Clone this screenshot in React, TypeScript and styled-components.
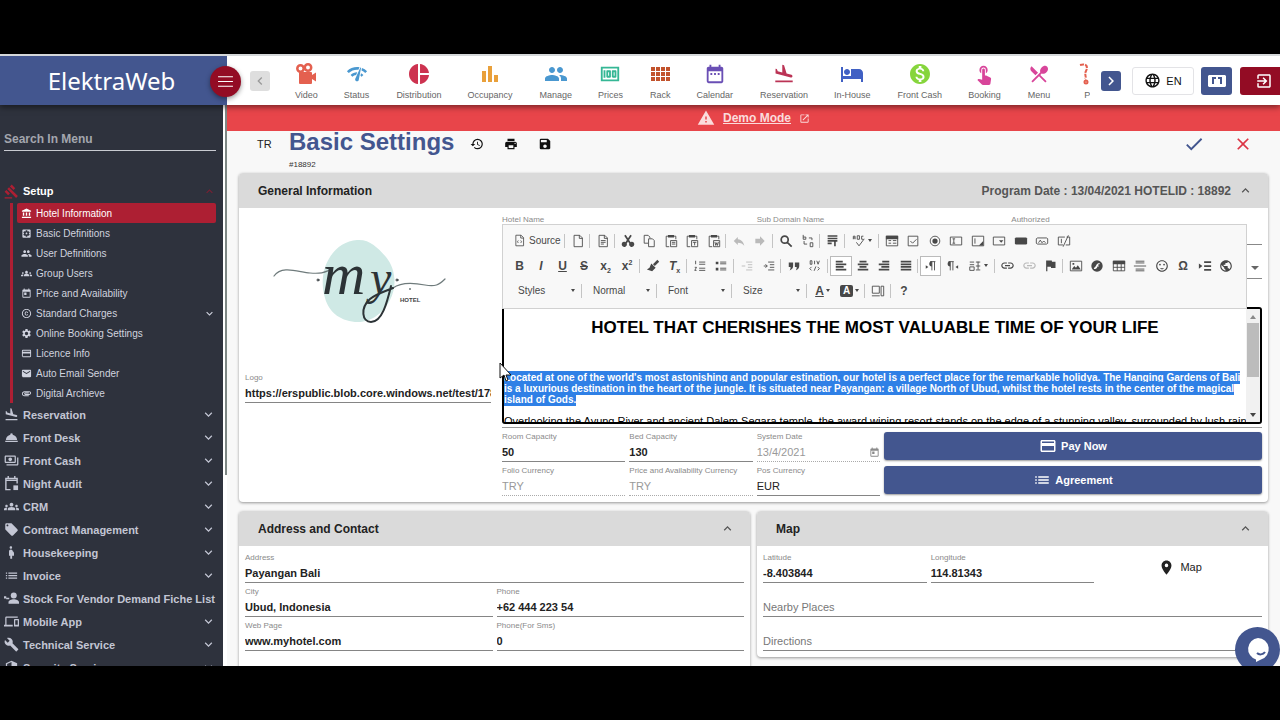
import React from "react";
import styled, { createGlobalStyle, css } from "styled-components";
import {
  MdAccountBalance, MdAttachment, MdBarChart, MdBuild, MdCheck, MdClose,
  MdCopyright, MdDateRange, MdDevices, MdEmail, MdExitToApp, MdExpandLess, MdExpandMore, MdFlag,
  MdFlightLand, MdForward, MdGavel, MdGroups, MdHistory, MdHotel, MdKeyboardArrowLeft,
  MdKeyboardArrowRight, MdLanguage, MdLink, MdList, MdLocalOffer, MdMoney, MdMonetizationOn,
  MdNetworkCheck, MdOpenInNew, MdOutlinePayments, MdPayment, MdPeople, MdPlace, MdPregnantWoman,
  MdPrint, MdPublic, MdReply, MdRestaurantMenu, MdRoomService, MdSave, MdSecurity,
  MdSentimentSatisfied, MdSettings, MdSettingsApplications, MdToday, MdTouchApp, MdWarning,
} from "react-icons/md";

const sans = `"Liberation Sans", Arial, sans-serif`;
const blue = "#43568f";
const red = "#ad1f33";

const Global = createGlobalStyle`
  *, *::before, *::after { box-sizing: border-box; }
  body { margin: 0; background: #000; font-family: ${sans}; }
  button, input, select { font-family: inherit; margin: 0; padding: 0; border: 0; background: none; color: inherit; }
  h1, h2, h3, p, ul { margin: 0; padding: 0; }
  ul { list-style: none; }
  svg { flex: none; display: block; }
`;

const Stage = styled.div`
  height: 100vh;
  padding: 54px 0;
  background: #000;
`;

const Screen = styled.div`
  position: relative;
  display: flex;
  flex-direction: column;
  height: 100%;
  overflow: hidden;
  background: #f8f8f8;
  border-top: 2px solid #d5d8da;
`;

/* ---------- header ---------- */

const Header = styled.header`
  position: relative;
  z-index: 2;
  display: flex;
  flex: none;
  height: 49px;
  background: #fff;
  box-shadow: 0 2px 6px rgba(0, 0, 0, 0.5);
`;

const Brand = styled.div`
  position: relative;
  display: flex;
  align-items: center;
  justify-content: center;
  flex: none;
  width: 227px;
  padding-right: 4px;
  background: ${blue};
  color: #fff;
  font: 24px "Noto Sans", sans-serif;
`;

const MenuToggle = styled.button`
  position: absolute;
  right: -14px;
  top: 10px;
  display: grid;
  place-items: center;
  width: 31px;
  height: 31px;
  border-radius: 50%;
  background: #930c24;
  color: #fff;
  box-shadow: 0 2px 5px rgba(0, 0, 0, 0.4);
`;

const Tools = styled.div`
  display: flex;
  align-items: center;
  flex: 1;
  min-width: 0;
  padding-left: 23px;
`;

const Pager = styled.button<{ $on?: boolean }>`
  display: grid;
  place-items: center;
  flex: none;
  width: 20px;
  height: 20px;
  border-radius: 3px;
  background: ${(p) => (p.$on ? blue : "#dedede")};
  color: ${(p) => (p.$on ? "#fff" : "#999")};
`;

const Strip = styled.nav`
  display: flex;
  flex: 1;
  min-width: 0;
  margin: 0 11px 0 12px;
  overflow: hidden;
`;

const StripItem = styled.a`
  display: flex;
  flex-direction: column;
  align-items: center;
  flex: none;
  gap: 4px;
  padding: 0 13px;
  color: #666;
  font-size: 9px;
  line-height: 10px;
  text-decoration: none;
  &:nth-child(even) { padding-right: 14px; }
`;

const StripIcon = styled.span<{ $color: string }>`
  display: grid;
  place-items: center;
  height: 24px;
  color: ${(p) => p.$color};
`;

const HeaderButton = styled.button<{ $kind: "plain" | "blue" | "exit" }>`
  display: flex;
  align-items: center;
  justify-content: center;
  gap: 5px;
  flex: none;
  height: 28px;
  border-radius: 3px;
  font-size: 11px;
  ${(p) => p.$kind === "plain" && css`width: 62px; margin-left: 11px; border: 1px solid #e3e3e6; color: #111;`}
  ${(p) => p.$kind === "blue" && css`width: 31px; margin-left: 7px; background: ${blue}; color: #fff;`}
  ${(p) => p.$kind === "exit" && css`width: 40px; margin-left: 8px; padding-left: 8px; background: #930c24; color: #fff; border-radius: 3px 0 0 3px;`}
`;

/* ---------- sidebar ---------- */

const Columns = styled.div`
  display: flex;
  flex: 1;
  min-height: 0;
`;

const Sidebar = styled.aside`
  flex: none;
  width: 223px;
  overflow: hidden;
  background: #2e323d;
  color: #c3c6d4;
`;

const SideScroll = styled.div`
  flex: none;
  width: 4px;
  padding-left: 2px;
  background: #fff;
  &::before { content: ""; display: block; width: 2px; height: 66%; background: #7e8785; }
`;

const MenuSearch = styled.input`
  display: block;
  width: 212px;
  height: 23px;
  margin: 23px 0 28px 4px;
  border-bottom: 1px solid #c9cbd1;
  font-size: 12px;
  font-weight: bold;
  outline: 0;
  &::placeholder { color: #a3a6ae; opacity: 1; }
`;

const MenuLink = styled.a<{ $open?: boolean }>`
  display: flex;
  align-items: center;
  height: ${(p) => (p.$open ? 24 : 23)}px;
  padding: 0 7px 0 4px;
  gap: 4px;
  color: ${(p) => (p.$open ? "#fff" : "inherit")};
  font-size: 11px;
  font-weight: bold;
  white-space: nowrap;
  text-decoration: none;
  svg:first-child { color: ${(p) => (p.$open ? red : "inherit")}; }
  svg:last-child { margin-left: auto; color: ${(p) => (p.$open ? "#7a2033" : "inherit")}; }
`;

const SubMenu = styled.ul`
  margin: 0 7px 0 10px;
  padding-left: 4px;
  border-left: 3px solid ${red};
`;

const SubLink = styled.a<{ $active?: boolean }>`
  display: flex;
  align-items: center;
  gap: 4px;
  height: 20px;
  padding: 0 0 0 4px;
  border-radius: 2px;
  background: ${(p) => (p.$active ? red : "none")};
  color: ${(p) => (p.$active ? "#fff" : "#d0d3df")};
  font-size: 10px;
  text-decoration: none;
  svg:nth-of-type(2) { margin-left: auto; }
`;

/* ---------- page ---------- */

const Page = styled.main`
  flex: 1;
  min-width: 0;
  overflow: hidden;
`;

const DemoBar = styled.div`
  display: flex;
  align-items: center;
  justify-content: center;
  gap: 8px;
  height: 26px;
  background: #e8454a;
  color: #fbdcdc;
  font-size: 12px;
  font-weight: bold;
  a { color: inherit; }
`;

const TitleRow = styled.div`
  display: flex;
  height: 42px;
  padding: 0 27px 0 30px;
`;

const Lang = styled.span`
  width: 32px;
  padding-top: 7px;
  font-size: 11px;
  line-height: 12px;
  color: #222;
`;

const Title = styled.h1`
  color: ${blue};
  font-size: 24px;
  line-height: 22px;
`;

const RecordId = styled.p`
  margin-top: 7px;
  font-size: 8px;
  line-height: 10px;
  color: #333;
`;

const IconButtons = styled.div<{ $end?: boolean }>`
  display: flex;
  align-items: center;
  gap: ${(p) => (p.$end ? 28 : 20)}px;
  height: 26px;
  margin-left: ${(p) => (p.$end ? "auto" : "16px")};
`;

const IconButton = styled.button<{ $color?: string }>`
  color: ${(p) => p.$color || "#111"};
`;

const Cards = styled.div`
  display: grid;
  grid-template-columns: repeat(2, minmax(0, 1fr));
  align-items: start;
  gap: 9px 7px;
  padding: 0 12px;
`;

const Card = styled.section<{ $wide?: boolean }>`
  grid-column: ${(p) => (p.$wide ? "1 / -1" : "auto")};
  border-radius: 4px;
  background: #fff;
  box-shadow: 0 1px 3px rgba(0, 0, 0, 0.4);
  overflow: hidden;
`;

const CardHead = styled.header`
  display: flex;
  align-items: center;
  height: 35px;
  padding: 0 15px 0 19px;
  background: #dadada;
  color: #555;
  font-size: 12px;
  font-weight: bold;
  h2 { margin-right: auto; font-size: 12px; color: #222; }
  svg { margin-left: 7px; }
`;

const General = styled.div`
  display: grid;
  grid-template-columns: 246px minmax(0, 1fr);
  gap: 11px;
  padding: 6px;
`;

const LogoColumn = styled.div`
  display: flex;
  flex-direction: column;
`;

const LogoArt = styled.div`
  display: flex;
  justify-content: center;
  height: 159px;
  padding: 25px 16px 0 0;
`;

const Fields = styled.div<{ $cols: number; $pad?: "short" | "tall" }>`
  display: grid;
  grid-template-columns: repeat(${(p) => p.$cols}, minmax(0, 1fr));
  align-items: start;
  gap: 4px;
  padding: ${(p) => (p.$pad ? "7px 6px" : 0)};
  padding-bottom: ${(p) => (p.$pad === "tall" ? 40 : p.$pad ? 6 : 0)}px;
`;

const FieldBox = styled.label<{ $span?: number }>`
  display: flex;
  flex-direction: column;
  justify-content: flex-end;
  gap: 1px;
  height: 30px;
  grid-column: span ${(p) => p.$span || 1};
  color: #8a8a8a;
  font-size: 8px;
  line-height: 10px;
  white-space: nowrap;
`;

const FieldLine = styled.span<{ $off?: boolean }>`
  display: flex;
  align-items: center;
  height: 19px;
  border-bottom: 1px ${(p) => (p.$off ? "dotted #aaa" : "solid #858585")};
`;

const FieldInput = styled.input<{ $off?: boolean; $light?: boolean }>`
  flex: 1;
  min-width: 0;
  width: 100%;
  height: 18px;
  outline: 0;
  color: ${(p) => (p.$off ? "#999" : "#222")};
  font-size: 11px;
  font-weight: ${(p) => (p.$off || p.$light ? "normal" : "bold")};
  &::placeholder { color: #777; opacity: 1; font-weight: normal; }
`;

const ActionButton = styled.button`
  display: flex;
  align-items: center;
  justify-content: center;
  gap: 4px;
  grid-column: span 3;
  height: 28px;
  border-radius: 3px;
  background: ${blue};
  color: #fff;
  font-size: 11px;
  font-weight: bold;
  box-shadow: 0 1px 2px rgba(0, 0, 0, 0.4);
`;

const MapButton = styled.button`
  display: flex;
  align-items: center;
  justify-content: center;
  gap: 5px;
  height: 28px;
  color: #222;
  font-size: 11px;
`;

/* ---------- editor ---------- */

const LabelRow = styled.div`
  display: grid;
  grid-template-columns: repeat(3, minmax(0, 1fr));
  gap: 4px;
  height: 10px;
  color: #8a8a8a;
  font-size: 8px;
  line-height: 12px;
`;

const EditorTop = styled.div`
  position: relative;
  z-index: 1;
  display: flex;
`;

const Toolbar = styled.div`
  flex: 1;
  min-width: 0;
  height: 85px;
  padding: 3px 6px;
  border: 1px solid #d1d1d1;
  background: #f8f8f8;
  color: #484848;
`;

const BarRow = styled.div`
  display: flex;
  align-items: center;
  height: 25px;
`;

const Tool = styled.button<{ $on?: boolean; $faint?: boolean; $wide?: boolean }>`
  display: flex;
  align-items: center;
  justify-content: center;
  gap: 2px;
  flex: none;
  width: ${(p) => (p.$wide ? 30 : 21)}px;
  height: 20px;
  font-size: 12px;
  font-weight: bold;
  opacity: ${(p) => (p.$faint ? 0.35 : 1)};
  ${(p) => p.$on && css`background: #fff; outline: 1px solid #bbb; outline-offset: -1px;`}
  &:nth-child(even) { width: ${(p) => (p.$wide ? 30 : 22)}px; }
  sub, sup { font-size: 7px; line-height: 0; }
`;

const ColourTool = styled(Tool)`
  &&, &&:nth-child(even) { width: 27px; }
`;

const Inverse = styled.span`
  width: 13px;
  border-radius: 2px;
  background: #484848;
  color: #fff;
  font-size: 10px;
  line-height: 12px;
`;

const SourceTool = styled.button`
  display: flex;
  align-items: center;
  gap: 3px;
  flex: none;
  width: 54px;
  padding-left: 4px;
  font-size: 10px;
`;

const Sep = styled.span`
  flex: none;
  width: 1px;
  height: 14px;
  margin: 0 2px 0 1px;
  background: #c4c4c4;
`;

const ComboTool = styled.button`
  display: flex;
  align-items: center;
  justify-content: space-between;
  flex: none;
  width: 71px;
  padding: 0 5px 0 9px;
  font-size: 10px;
`;

const Caret = styled.i`
  border: 2px solid transparent;
  border-top: 3px solid currentColor;
  border-bottom: 0;
`;

const Behind = styled.div`
  display: flex;
  flex-direction: column;
  flex: none;
  width: 15px;
  padding-top: 20px;
`;

const BehindLine = styled.div`
  display: flex;
  align-items: center;
  justify-content: center;
  color: #666;
  border-bottom: 1px solid #888;
  & + & { height: 34px; padding-top: 12px; }
  ${Caret} { border-width: 4px 4px 0; }
`;

const Document = styled.div`
  display: flex;
  height: 117px;
  margin-top: -2px;
  border: 2px solid #000;
  border-radius: 0 3px 3px 3px;
  overflow: hidden;
  color: #000;
`;

const Text = styled.div`
  flex: 1;
  min-width: 0;
  overflow: hidden;
  font-size: 10px;
  line-height: 11px;
  h3 { margin: 9px 0 34px; font-size: 17px; line-height: 20px; text-align: center; }
  p { margin-bottom: 11px; white-space: nowrap; }
  p + p { font-size: 11px; }
  mark { padding: 1px 0; background: #2f80e6; color: #fff; font-weight: bold; }
`;

const ScrollTrack = styled.div`
  display: flex;
  flex-direction: column;
  align-items: center;
  flex: none;
  width: 14px;
  padding: 6px 0 5px;
  background: #f1f1f1;
  &::before { content: ""; border: 3px solid transparent; border-top: 0; border-bottom: 4px solid #888; }
  &::after { content: ""; margin-top: auto; border: 3px solid transparent; border-bottom: 0; border-top: 4px solid #444; }
`;

const Thumb = styled.div`
  width: 12px;
  height: 54px;
  margin-top: 4px;
  background: #bcbcbc;
`;

const Underline = styled.div`
  height: 4px;
  margin-bottom: 4px;
  border-bottom: 1px solid #999;
`;

const Pointer = styled.svg`
  position: absolute;
  left: 499px;
  top: 306px;
`;

const Chat = styled.button`
  position: absolute;
  right: 0;
  bottom: -6px;
  display: grid;
  place-items: center;
  width: 45px;
  height: 45px;
  border-radius: 50%;
  background: ${blue};
`;

/* ---------- drawings ---------- */

type GlyphProps = { d: string; fill?: string; size?: number; w?: number };
const Glyph = ({ d, fill, size = 14, w = 1 }: GlyphProps) => (
  <svg width={size} height={size} viewBox="0 0 16 16" fill="none" stroke="currentColor" strokeWidth={w}>
    <path d={d} />
    {fill && <path d={fill} fill="currentColor" stroke="none" />}
  </svg>
);

const page = "M3.5 1.5H10l3 3v10H3.5zM9.5 1.5V5H13";
const board = "M4.5 2.5H2.5V14.5H6M11.5 2.5H13.5V6";

const CameraIcon = () => (
  <svg width="22" height="22" viewBox="0 0 22 22" fill="currentColor">
    <g fill="none" stroke="currentColor" strokeWidth="2.500">
      <circle cx="5.500" cy="5.500" r="3.200" />
      <circle cx="13" cy="4.500" r="3.200" />
    </g>
    <path d="M5 9h11a1 1 0 0 1 1 1v2l4-2.500v9L17 16v4a1 1 0 0 1-1 1H5a1 1 0 0 1-1-1V10a1 1 0 0 1 1-1z" />
  </svg>
);

const PieIcon = () => (
  <svg width="24" height="24" viewBox="0 0 24 24" fill="currentColor">
    <path d="M11 2v20c-5.070-.5-9-4.790-9-10s3.930-9.500 9-10zm2.030 0v8.990H22c-.47-4.740-4.240-8.520-8.970-8.990zm0 11.010V22c4.740-.47 8.500-4.250 8.970-8.990z" />
  </svg>
);

const RackIcon = () => (
  <svg width="19" height="14" viewBox="0 0 19 14" fill="currentColor">
    {[0, 5, 10, 15].map((x) => [0, 5, 10].map((y) => <rect key={x + "-" + y} x={x} y={y} width="4" height="4" />))}
  </svg>
);

const StrawIcon = () => (
  <svg width="22" height="22" viewBox="0 0 22 22" fill="none" stroke="currentColor" strokeWidth="2">
    <path d="M4 2c7-2 8 2 6 6s1 6-1 8" strokeDasharray="4 1" />
    <circle cx="10" cy="19" r="1.500" />
  </svg>
);

const AuditIcon = () => (
  <svg width="15" height="15" viewBox="0 0 16 16" fill="none" stroke="currentColor" strokeWidth="1.500">
    <path d="M7 14.500H2v-12h12V8M2 4.500h12M4.500 0v3M11.500 0v3" />
    <path d="M10 10h5v5h-5z" fill="currentColor" stroke="none" />
  </svg>
);

const VendorIcon = () => (
  <svg width="15" height="15" viewBox="0 0 20 20" fill="currentColor">
    <circle cx="13" cy="6" r="4" />
    <path d="M6 17v-2c0-2.500 4-4 7-4s7 1.500 7 4v2zM0 7h3v2h4v2H3v-1H0z" />
  </svg>
);

const HotelLogo = () => (
  <svg width="174" height="88" viewBox="0 0 174 88" role="img" aria-label="my hotel">
    <path d="M84 1c13-1 21 8 29 17 10 12 11 30 4 43-6 12-18 22-32 22-16 0-29-9-33-24-4-13-3-29 5-41 6-10 16-16 27-17z" fill="#cfe9e5" />
    <g fill="none" stroke="#2c3336" strokeLinecap="round">
      <path d="M1 37c8-11 24-4 36-3s15-1 20-3" strokeWidth="1.200" stroke="#6f7b7c" />
      <path d="M120 49c8-6 22-5 32-3s14 0 20-6" strokeWidth="1.200" stroke="#6f7b7c" />
      <path d="M118 47c-4 17-9 36-20 36-9 0-11-14-1-23 6-5 13-7 23-11" strokeWidth="2" />
      <circle cx="45" cy="41" r="1" />
      <circle cx="124" cy="41" r="1" />
      <circle cx="137" cy="50" r="1" strokeWidth="0" fill="#6f7b7c" />
    </g>
    <text x="49" y="55" fontFamily="Liberation Serif, serif" fontStyle="italic" fontSize="60" fill="#2c3336">m</text>
    <text x="97" y="55" fontFamily="Liberation Serif, serif" fontStyle="italic" fontSize="48" fill="#2c3336">y</text>
    <text x="127" y="63" fontFamily="Liberation Sans, sans-serif" fontWeight="bold" fontSize="6" fill="#444">HOTEL</text>
  </svg>
);

/* ---------- data ---------- */

const strip: [string, string, React.ReactNode][] = [
  ["Video", "#e4604f", <CameraIcon key="i" />],
  ["Status", "#4a98d0", <MdNetworkCheck key="i" size={22} />],
  ["Distribution", "#cd3350", <PieIcon key="i" />],
  ["Occupancy", "#e9a03b", <MdBarChart key="i" size={24} />],
  ["Manage", "#4a98d0", <MdPeople key="i" size={24} />],
  ["Prices", "#35b795", <MdMoney key="i" size={22} />],
  ["Rack", "#c2522b", <RackIcon key="i" />],
  ["Calendar", "#6a4fb5", <MdDateRange key="i" size={22} />],
  ["Reservation", "#bb3355", <MdFlightLand key="i" size={22} />],
  ["In-House", "#4060c4", <MdHotel key="i" size={24} />],
  ["Front Cash", "#86d53c", <MdMonetizationOn key="i" size={24} />],
  ["Booking", "#d8459a", <MdTouchApp key="i" size={22} />],
  ["Menu", "#d8459a", <MdRestaurantMenu key="i" size={22} />],
  ["P", "#e4604f", <StrawIcon key="i" />],
];

const setup: [string, React.ReactNode][] = [
  ["Hotel Information", <MdAccountBalance key="i" size={11} />],
  ["Basic Definitions", <MdSettingsApplications key="i" size={11} />],
  ["User Definitions", <MdPeople key="i" size={11} />],
  ["Group Users", <MdGroups key="i" size={11} />],
  ["Price and Availability", <MdToday key="i" size={11} />],
  ["Standard Charges", <MdCopyright key="i" size={11} />],
  ["Online Booking Settings", <MdSettings key="i" size={11} />],
  ["Licence Info", <MdPayment key="i" size={11} />],
  ["Auto Email Sender", <MdEmail key="i" size={11} />],
  ["Digital Archieve", <MdAttachment key="i" size={11} />],
];

const menu: [string, React.ReactNode][] = [
  ["Reservation", <MdFlightLand key="i" size={15} />],
  ["Front Desk", <MdRoomService key="i" size={15} />],
  ["Front Cash", <MdOutlinePayments key="i" size={15} />],
  ["Night Audit", <AuditIcon key="i" />],
  ["CRM", <MdGroups key="i" size={15} />],
  ["Contract Management", <MdLocalOffer key="i" size={15} />],
  ["Housekeeping", <MdPregnantWoman key="i" size={15} />],
  ["Invoice", <MdList key="i" size={15} />],
  ["Stock For Vendor Demand Fiche List", <VendorIcon key="i" />],
  ["Mobile App", <MdDevices key="i" size={15} />],
  ["Technical Service", <MdBuild key="i" size={15} />],
  ["Security Service", <MdSecurity key="i" size={15} />],
];

type Item = { n: string; g?: React.ReactNode; on?: boolean; faint?: boolean; wide?: boolean };
const t = (n: string, g: React.ReactNode, extra: Partial<Item> = {}): Item => ({ n, g, ...extra });

const rowOne: (Item | null)[] = [
  t("New page", <Glyph d={page} />), null,
  t("Templates", <Glyph d={page + "M5.5 7.5H11M5.5 9.5H11M5.5 11.5H9"} />), null,
  t("Cut", <Glyph d="M4.500 1.500l6 9M11.500 1.500l-6 9" w={2} fill="M5 9a3 3 0 1 0 0 5.500A3 3 0 0 0 5 9zM11 9a3 3 0 1 1 0 5.500A3 3 0 0 1 11 9z" />),
  t("Copy", <Glyph d="M7 10.500H2.500v-9H7l2 2V5M7.500 5.500H12l2 2v7H7.500z" />),
  t("Paste", <Glyph d={board + "M7.5 7.5h7v7h-7zM9 9.5h4M9 11.5h4"} fill="M4.500 1h7v3h-7z" />),
  t("Paste as text", <Glyph d={board + "M7.5 7.5h7v7h-7zM9 9.5h4M11 9.5V13"} fill="M4.500 1h7v3h-7z" />),
  t("Paste from Word", <Glyph d={board + "M7.5 7.5h7v7h-7zM9 9l1 4 1-3 1 3 1-4"} fill="M4.500 1h7v3h-7z" />), null,
  t("Undo", <MdReply size={14} />, { faint: true }),
  t("Redo", <MdForward size={14} />, { faint: true }), null,
  t("Find", <Glyph d="M6.500 2.500a4 4 0 1 0 0 8 4 4 0 0 0 0-8zM9.500 9.500l5 5" w={2} />),
  t("Replace", <Glyph d="M2.500 1v5h3V3.500h-3M13.500 14.500V10h-3v4.500h3M3.500 8v3.500H7M12.500 7V4.500H9" size={14} />), null,
  t("Select all", <Glyph d="M2 2.500h12M2 5.500h12M2 8.500h12M2 11.500h5M11 9v6" w={2} size={13} />), null,
  t("Spell check", <Glyph d="M1.500 6V2.500h2V6M1.500 4.500h2M6 2v4h2.500V2zM13 2.500h-2V6h2M5 9.500l3 4 6-8" size={14} />, { wide: true }), null,
  t("Form", <Glyph d="M1.500 2.500h13v11h-13zM4 7.500h3M4 10.500h3M9 7.500h4M9 10.500h4" fill="M1 2h14v4H1z" />),
  t("Checkbox", <Glyph d="M2.500 2.500h11v11h-11zM5 8l2.500 2.500L12 6" />),
  t("Radio button", <Glyph d="M8 2.500a5.500 5.500 0 1 0 0 11 5.500 5.500 0 0 0 0-11z" fill="M8 5a3 3 0 1 0 0 6 3 3 0 0 0 0-6z" />),
  t("Text field", <Glyph d="M1.500 3.500h13v9h-13zM5.500 5.500v5M4 5.500h3M4 10.500h3" />),
  t("Text area", <Glyph d="M1.500 2.500h13v11h-13zM4.500 5v6" fill="M14 8v5H9z" />),
  t("Selection field", <Glyph d="M1.500 3.500h13v9h-13z" fill="M8 7h5l-2.500 3z" />),
  t("Button", <Glyph d="" fill="M2 4h12l1 1v6l-1 1H2l-1-1V5z" />),
  t("Image button", <Glyph d="M2.500 4.500h11l1 1v5l-1 1h-11l-1-1v-5zM4 10l2-3 2 3 2-2 2 2" />),
  t("Hidden field", <Glyph d="M7 12.500H1.500v-9H9M5 5.500v5M11 3.500h3.500v9H10M13 1.500l-6 13" />),
];

const rowTwo: (Item | null)[] = [
  t("Bold", "B"), t("Italic", <em>I</em>), t("Underline", <u>U</u>), t("Strike", <s>S</s>),
  t("Subscript", <span>x<sub>2</sub></span>), t("Superscript", <span>x<sup>2</sup></span>), null,
  t("Copy formatting", <Glyph d="M14 2L9 7" w={3} fill="M6 5l5 5-4 4-6-2 3-2z" />),
  t("Remove format", <span><em>T</em><sub>x</sub></span>), null,
  t("Numbered list", <Glyph d="M3 2v4M2 9.500h2L2 13h2M7 3.500h7M7 6h7M7 10.500h7M7 13h7" />),
  t("Bulleted list", <Glyph d="M7 3.500h7M7 5.500h7M7 10.500h7M7 12.500h7" fill="M2 3h3v3H2zM2 10h3v3H2z" />), null,
  t("Decrease indent", <Glyph d="M7 3.500h7M9 6.500h5M9 9.500h5M7 12.500h7M2 8h4" />, { faint: true }),
  t("Increase indent", <Glyph d="M7 3.500h7M9 6.500h5M9 9.500h5M7 12.500h7M2 8h4M4 6l2 2-2 2" />), null,
  t("Quote", <Glyph d="" fill="M2 4h5v4c0 2-1 4-4 5 1-1.500 1-2.500 1-4H2zM9 4h5v4c0 2-1 4-4 5 1-1.500 1-2.500 1-4H9z" />),
  t("Div container", <Glyph d="M2.500 2v4h2V2zM7.500 2v4M10 2l1.500 4L13 2M4 9l-2 2 2 2M9 8.500l-2 5M11 9l2 2-2 2" />), null,
  t("Align left", <Glyph d="M2 3h8M2 6h12M2 9h9M2 12h12" w={2} />, { on: true }),
  t("Centre", <Glyph d="M4 3h8M2 6h12M4 9h8M2 12h12" w={2} />),
  t("Align right", <Glyph d="M6 3h8M2 6h12M5 9h9M2 12h12" w={2} />),
  t("Justify", <Glyph d="M2 3h12M2 6h12M2 9h12M2 12h12" w={2} />), null,
  t("Left to right", <Glyph d="M9 3v10M12 3v10M7 3h6" fill="M9 2.500a3 3 0 0 0 0 6zM2 7l3 2-3 2z" />, { on: true }),
  t("Right to left", <Glyph d="M6 3v10M9 3v10M4 3h6" fill="M6 2.500a3 3 0 0 0 0 6zM15 7l-3 2 3 2z" />),
  t("Language", <Glyph d="M2 3.500h5M2 6.500h5M2 9h5v4H2zM9 3.500h5M11.500 3v9M9 8h5M9 12.500h5" />, { wide: true }), null,
  t("Link", <MdLink size={15} />),
  t("Unlink", <MdLink size={15} />, { faint: true }),
  t("Anchor", <MdFlag size={15} />), null,
  t("Image", <Glyph d="M1.500 2.500h13v11h-13z" fill="M3 12l3-4 2 2 2-3 3.500 5zM4 4.500h2v2H4z" />),
  t("Flash", <Glyph d="" fill="M8 1.500a6.500 6.500 0 1 0 0 13 6.500 6.500 0 0 0 0-13zm3 3v1.500c-1.500 0-1.500.500-2 1.500h1v1H8.500C8 10.500 7 11.500 4.500 11.500V10c2.500 0 2-5.500 6.500-5.500z" />),
  t("Table", <Glyph d="M1.500 2.500h13v11h-13zM1.500 9.500h13M6 5v8.500M10.500 5v8.500" fill="M1 2h14v4H1z" />),
  t("Horizontal line", <Glyph d="M3 2.500h10M3 4.500h10M1 8h14M3 11.500h10M3 13.500h10" />),
  t("Smiley", <MdSentimentSatisfied size={14} />),
  t("Special character", "Ω"),
  t("Page break", <Glyph d="M7 3.500h8M7 8h8M7 12.500h8" w={2} fill="M1 5l4 3-4 3z" />),
  t("IFrame", <MdPublic size={14} />),
];

/* ---------- components ---------- */

const ToolItems = ({ items }: { items: (Item | null)[] }) => (
  <>
    {items.map((it, i) =>
      it ? (
        <Tool key={i} type="button" aria-label={it.n} $on={it.on} $faint={it.faint} $wide={it.wide}>
          {it.g}
          {it.wide && <Caret />}
        </Tool>
      ) : (
        <Sep key={i} />
      ),
    )}
  </>
);

type FieldProps = { label?: string; value?: string; placeholder?: string; span?: number; off?: boolean; light?: boolean; icon?: React.ReactNode };
const Field = ({ label, value, placeholder, span, off, light, icon }: FieldProps) => (
  <FieldBox $span={span}>
    {label}
    <FieldLine $off={off}>
      <FieldInput defaultValue={value} placeholder={placeholder} aria-label={placeholder} readOnly={off} $off={off} $light={light} />
      {icon}
    </FieldLine>
  </FieldBox>
);

const Editor = () => (
  <div>
    <EditorTop>
      <Toolbar role="toolbar" aria-label="Editor">
        <BarRow>
          <SourceTool type="button">
            <Glyph size={13} d={page + "M6.5 8l-1 1.5 1 1.5M9.5 8l1 1.5-1 1.5"} />
            Source
          </SourceTool>
          <Sep />
          <ToolItems items={rowOne} />
        </BarRow>
        <BarRow>
          <ToolItems items={rowTwo} />
        </BarRow>
        <BarRow>
          {["Styles", "Normal", "Font", "Size"].map((name) => (
            <React.Fragment key={name}>
              <ComboTool type="button">
                {name}
                <Caret />
              </ComboTool>
              <Sep />
            </React.Fragment>
          ))}
          <ColourTool type="button" aria-label="Text colour"><u>A</u><Caret /></ColourTool>
          <ColourTool type="button" aria-label="Background colour"><Inverse>A</Inverse><Caret /></ColourTool>
          <Sep />
          <Tool type="button" aria-label="Show blocks"><Glyph d="M1.500 2.500h8v8h-8zM11.500 2.500h3v11h-3zM1 13.500h9" /></Tool>
          <Sep />
          <Tool type="button" aria-label="About">?</Tool>
        </BarRow>
      </Toolbar>
      <Behind>
        <BehindLine />
        <BehindLine><Caret /></BehindLine>
      </Behind>
    </EditorTop>
    <Document>
      <Text>
        <h3>HOTEL THAT CHERISHES THE MOST VALUABLE TIME OF YOUR LIFE</h3>
        <p>
          <mark>
            Located at one of the world's most astonishing and popular estination, our hotel is a perfect place for the remarkable holidya. The Hanging Gardens of Bali<br />
            is a luxurious destination in the heart of the jungle. It is situated near Payangan: a village North of Ubud, whilst the hotel rests in the center of the magical<br />
            island of Gods.
          </mark>
        </p>
        <p>Overlooking the Ayung River and ancient Dalem Segara temple, the award wining resort stands on the edge of a stunning valley, surrounded by lush rain</p>
      </Text>
      <ScrollTrack><Thumb /></ScrollTrack>
    </Document>
  </div>
);

export default function App() {
  return (
    <Stage>
      <Global />
      <Screen>
        <Header>
          <Brand>
            ElektraWeb
            <MenuToggle type="button" aria-label="Toggle menu"><Glyph size={17} d="M1 3.500h14M1 8h14M1 12.500h14" /></MenuToggle>
          </Brand>
          <Tools>
            <Pager type="button" aria-label="Previous"><MdKeyboardArrowLeft size={16} /></Pager>
            <Strip>
              {strip.map(([name, color, icon]) => (
                <StripItem key={name} href="#">
                  <StripIcon $color={color}>{icon}</StripIcon>
                  {name}
                </StripItem>
              ))}
            </Strip>
            <Pager type="button" aria-label="Next" $on><MdKeyboardArrowRight size={18} /></Pager>
            <HeaderButton type="button" $kind="plain"><MdLanguage size={17} />EN</HeaderButton>
            <HeaderButton type="button" aria-label="Screens" $kind="blue">
              <svg width="18" height="12" viewBox="0 0 18 12">
                <path d="M1 0h16l1 1v10l-1 1H1l-1-1V1z" fill="#fff" />
                <path d="M5 9V3h3M13 9V3h-3" stroke={blue} strokeWidth="2" fill="none" />
              </svg>
            </HeaderButton>
            <HeaderButton type="button" aria-label="Exit" $kind="exit"><MdExitToApp size={18} /></HeaderButton>
          </Tools>
        </Header>
        <Columns>
          <Sidebar>
            <MenuSearch placeholder="Search In Menu" aria-label="Search In Menu" />
            <nav>
              <MenuLink href="#" $open><MdGavel size={15} />Setup<MdExpandLess size={13} /></MenuLink>
              <SubMenu>
                {setup.map(([name, icon], i) => (
                  <li key={name}>
                    <SubLink href="#" $active={i === 0}>
                      {icon}
                      {name}
                      {name === "Standard Charges" && <MdExpandMore size={13} />}
                    </SubLink>
                  </li>
                ))}
              </SubMenu>
              {menu.map(([name, icon]) => (
                <MenuLink key={name} href="#">
                  {icon}
                  <span>{name}</span>
                  {!name.startsWith("Stock") && <MdExpandMore size={15} />}
                </MenuLink>
              ))}
            </nav>
          </Sidebar>
          <SideScroll />
          <Page>
            <DemoBar>
              <MdWarning size={18} />
              <a href="#">Demo Mode</a>
              <MdOpenInNew size={11} />
            </DemoBar>
            <TitleRow>
              <Lang>TR</Lang>
              <div>
                <Title>Basic Settings</Title>
                <RecordId>#18892</RecordId>
              </div>
              <IconButtons>
                <IconButton type="button" aria-label="History"><MdHistory size={14} /></IconButton>
                <IconButton type="button" aria-label="Print"><MdPrint size={14} /></IconButton>
                <IconButton type="button" aria-label="Save"><MdSave size={14} /></IconButton>
              </IconButtons>
              <IconButtons $end>
                <IconButton type="button" aria-label="Apply" $color={blue}><MdCheck size={22} /></IconButton>
                <IconButton type="button" aria-label="Close" $color="#dc3545"><MdClose size={20} /></IconButton>
              </IconButtons>
            </TitleRow>
            <Cards>
              <Card $wide>
                <CardHead><h2>General Information</h2>Program Date : 13/04/2021 HOTELID : 18892<MdExpandLess size={15} /></CardHead>
                <General>
                  <LogoColumn>
                    <LogoArt><HotelLogo /></LogoArt>
                    <Field label="Logo" value="https://erspublic.blob.core.windows.net/test/17892.png" />
                  </LogoColumn>
                  <div>
                    <LabelRow><span>Hotel Name</span><span>Sub Domain Name</span><span>Authorized</span></LabelRow>
                    <Editor />
                    <Underline />
                    <Fields $cols={6}>
                      <Field label="Room Capacity" value="50" />
                      <Field label="Bed Capacity" value="130" />
                      <Field label="System Date" value="13/4/2021" off icon={<MdToday size={11} />} />
                      <ActionButton type="button"><MdPayment size={18} />Pay Now</ActionButton>
                      <Field label="Folio Currency" value="TRY" off />
                      <Field label="Price and Availability Currency" value="TRY" off />
                      <Field label="Pos Currency" value="EUR" light />
                      <ActionButton type="button"><MdList size={18} />Agreement</ActionButton>
                    </Fields>
                  </div>
                </General>
              </Card>
              <Card>
                <CardHead><h2>Address and Contact</h2><MdExpandLess size={15} /></CardHead>
                <Fields $cols={2} $pad="tall">
                  <Field label="Address" value="Payangan Bali" span={2} />
                  <Field label="City" value="Ubud, Indonesia" />
                  <Field label="Phone" value="+62 444 223 54" />
                  <Field label="Web Page" value="www.myhotel.com" />
                  <Field label="Phone(For Sms)" value="0" />
                </Fields>
              </Card>
              <Card>
                <CardHead><h2>Map</h2><MdExpandLess size={15} /></CardHead>
                <Fields $cols={3} $pad="short">
                  <Field label="Latitude" value="-8.403844" />
                  <Field label="Longitude" value="114.81343" />
                  <MapButton type="button"><MdPlace size={17} />Map</MapButton>
                  <Field placeholder="Nearby Places" span={3} />
                  <Field placeholder="Directions" span={3} />
                </Fields>
              </Card>
            </Cards>
          </Page>
        </Columns>
        <Pointer width="12" height="20" viewBox="0 0 12 20">
          <path d="M1 1v15l4-3 2 6 2-1-2-5h5z" fill="#fff" stroke="#111" />
        </Pointer>
        <Chat type="button" aria-label="Open chat">
          <svg width="24" height="26" viewBox="0 0 24 26">
            <path d="M12 1a11 11 0 0 1 3 21.500L10 25v-2.500A11 11 0 0 1 12 1z" fill="#fff" />
            <path d="M11 16c2 2 6 2 8-1" stroke={blue} strokeWidth="2" fill="none" />
          </svg>
        </Chat>
      </Screen>
    </Stage>
  );
}
